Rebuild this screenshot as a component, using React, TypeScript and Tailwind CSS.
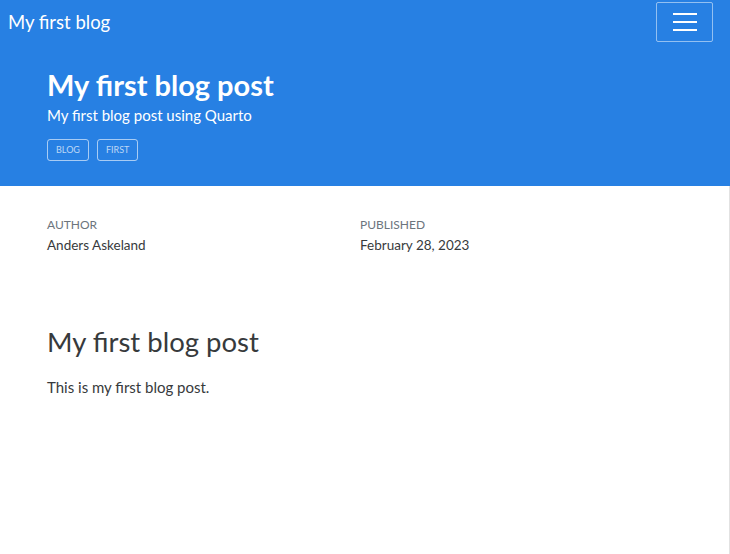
export default function App() {
  const font = { fontFamily: "Lato, 'Noto Sans', sans-serif" }
  return (
    <div className="min-h-[554px] w-[730px] bg-white text-[#373a3c]" style={font}>
      <header className="bg-[#2780e3] text-white">
        <nav className="flex h-[44px] items-center justify-between pl-2 pr-[17px]">
          <a className="text-[18.5px] leading-none">My first blog</a>
          <button className="flex h-[40px] w-[57px] flex-col items-center justify-center gap-[6px] rounded-[2px] border border-white/50">
            <span className="block h-[2px] w-[24px] bg-white"></span>
            <span className="block h-[2px] w-[24px] bg-white"></span>
            <span className="block h-[2px] w-[24px] bg-white"></span>
          </button>
        </nav>
        <div className="px-[47px] pb-[25px] pt-[23px]">
          <h1 className="text-[29px] font-bold leading-[36px]">My first blog post</h1>
          <p className="mt-[2px] text-[15px] leading-[20px]">My first blog post using Quarto</p>
          <div className="mt-[14px] flex gap-2">
            <span className="rounded-[3px] border border-white/60 px-2 py-[4px] text-[9px] uppercase leading-[12px] text-white/70">Blog</span>
            <span className="rounded-[3px] border border-white/60 px-2 py-[4px] text-[9px] uppercase leading-[12px] text-white/70">First</span>
          </div>
        </div>
      </header>
      <main className="min-h-[368px] border-r border-[#e2e2e2] px-[47px]">
        <div className="grid grid-cols-[313px_1fr] pt-[31px]">
          <div>
            <div className="text-[12px] uppercase leading-[16px] text-[#6c757d]">Author</div>
            <div className="mt-[2px] text-[13.5px] leading-[20px]">Anders Askeland</div>
          </div>
          <div>
            <div className="text-[12px] uppercase leading-[16px] text-[#6c757d]">Published</div>
            <div className="mt-[2px] text-[13.5px] leading-[20px]">February 28, 2023</div>
          </div>
        </div>
        <h2 className="mt-[69px] text-[27.5px] font-normal leading-[36px]">My first blog post</h2>
        <p className="mt-[17px] text-[15px] leading-[20px]">This is my first blog post.</p>
      </main>
    </div>
  )
}
